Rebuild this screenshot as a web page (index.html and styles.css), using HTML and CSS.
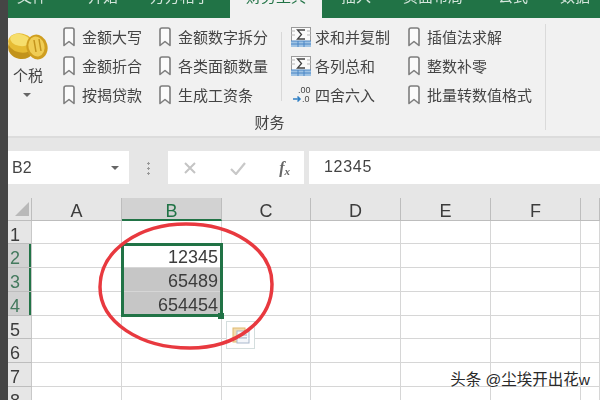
FILE: index.html
```html
<!DOCTYPE html>
<html lang="zh-CN">
<head>
<meta charset="UTF-8">
<title>财务工具</title>
<link rel="stylesheet" href="styles.css">
</head>
<body>
<svg class="defs" width="0" height="0">
    <symbol id="mark" viewBox="0 0 12 20">
        <path d="M1 3Q1 1 3 1H9Q11 1 11 3V18.500L6 14.500L1 18.500Z" fill="#fbfbfb" stroke="#7d7d7d" stroke-width="1.600" stroke-linejoin="round"/>
    </symbol>
    <symbol id="sum" viewBox="0 0 20 20">
        <rect x="0.500" y="0.500" width="19" height="19" fill="#fafafa" stroke="#9a9a9a"/>
        <path d="M0 14H20V20H0Z" fill="#9fc3e4"/>
        <path d="M0 14H20M0 17H20M7 14V20M13 14V20" stroke="#4a86c5" stroke-width="1"/>
        <path d="M0 4H4M0 8H4M16 4H20M16 8H20" stroke="#b5b5b5"/>
        <path d="M14 3H6.500L10.500 7.500L6.500 12H14" fill="none" stroke="#444" stroke-width="1.300"/>
    </symbol>
</svg>
<div class="app">
    <div class="edge"></div>
    <div class="main">
        <div class="tabs">
            <div class="tab tab-1"><span>文件</span></div>
            <div class="tab tab-2"><span>开始</span></div>
            <div class="tab tab-3"><span>方方格子</span></div>
            <div class="tab tab-4 active"><span>财务工具</span></div>
            <div class="tab tab-5"><span>插入</span></div>
            <div class="tab tab-6"><span>页面布局</span></div>
            <div class="tab tab-7"><span>公式</span></div>
            <div class="tab tab-8"><span>数据</span></div>
        </div>
        <div class="ribbon">
            <div class="group">
                <div class="group-row">
                    <div class="tax">
                        <svg class="coins" width="40" height="28" viewBox="0 0 40 28">
                            <ellipse cx="13" cy="16" rx="13" ry="11" fill="#c2931c" transform="rotate(12 13 16)"/>
                            <ellipse cx="13" cy="11" rx="13" ry="9.500" fill="#e6bb33" transform="rotate(12 13 11)"/>
                            <ellipse cx="12" cy="8" rx="10" ry="6" fill="#f6de6c" transform="rotate(12 12 8)"/>
                            <ellipse cx="29" cy="15" rx="10.500" ry="12.500" fill="#cf9e20" transform="rotate(-15 29 15)"/>
                            <ellipse cx="28.500" cy="14.500" rx="8" ry="10" fill="#f0cd55" transform="rotate(-15 28.500 14.500)"/>
                            <path d="M26 8L28 20M31 7L33 19" stroke="#c4951d" stroke-width="1.500"/>
                        </svg>
                        <div class="tax-label">个税</div>
                        <div class="caret"></div>
                    </div>
                    <div class="col col-1">
                        <div class="item"><svg class="mark"><use href="#mark"/></svg>金额大写</div>
                        <div class="item"><svg class="mark"><use href="#mark"/></svg>金额折合</div>
                        <div class="item"><svg class="mark"><use href="#mark"/></svg>按揭贷款</div>
                    </div>
                    <div class="col col-2">
                        <div class="item"><svg class="mark"><use href="#mark"/></svg>金额数字拆分</div>
                        <div class="item"><svg class="mark"><use href="#mark"/></svg>各类面额数量</div>
                        <div class="item"><svg class="mark"><use href="#mark"/></svg>生成工资条</div>
                    </div>
                    <div class="col col-3">
                        <div class="item"><svg class="sum"><use href="#sum"/></svg>求和并复制</div>
                        <div class="item"><svg class="sum"><use href="#sum"/></svg>各列总和</div>
                        <div class="item">
                            <svg class="sum" viewBox="0 0 20 20">
                                <text x="7" y="8" class="dec">.00</text>
                                <text x="11" y="17" class="dec">.0</text>
                                <path d="M2 14H9M6.500 11.500L9 14L6.500 16.500" fill="none" stroke="#2f7fc4" stroke-width="1.500"/>
                            </svg>四舍六入
                        </div>
                    </div>
                    <div class="col col-4">
                        <div class="item"><svg class="mark"><use href="#mark"/></svg>插值法求解</div>
                        <div class="item"><svg class="mark"><use href="#mark"/></svg>整数补零</div>
                        <div class="item"><svg class="mark"><use href="#mark"/></svg>批量转数值格式</div>
                    </div>
                </div>
                <div class="group-label">财务</div>
            </div>
        </div>
        <div class="formula-bar">
            <div class="name-box">B2<span class="caret"></span></div>
            <div class="dots"></div>
            <div class="fx-box">
                <svg width="14" height="14" viewBox="0 0 14 14"><path d="M2 2L12 12M12 2L2 12" stroke="#c4c4c4" stroke-width="2"/></svg>
                <svg width="16" height="14" viewBox="0 0 16 14"><path d="M1 8L6 13L15 2" fill="none" stroke="#c8c8c8" stroke-width="2.200"/></svg>
                <span class="fx">f<sub>x</sub></span>
            </div>
            <div class="formula-input">12345</div>
        </div>
        <div class="sheet">
            <div class="head corner"><div class="corner-mark"></div></div>
            <div class="head">A</div><div class="head head-on">B</div><div class="head">C</div><div class="head">D</div><div class="head">E</div><div class="head">F</div><div class="head"></div>

            <div class="num">1</div><div class="cell"></div><div class="cell"></div><div class="cell"></div><div class="cell"></div><div class="cell"></div><div class="cell"></div><div class="cell"></div>
            <div class="num num-on">2</div><div class="cell"></div><div class="cell">12345</div><div class="cell"></div><div class="cell"></div><div class="cell"></div><div class="cell"></div><div class="cell"></div>
            <div class="num num-on">3</div><div class="cell"></div><div class="cell grey">65489</div><div class="cell"></div><div class="cell"></div><div class="cell"></div><div class="cell"></div><div class="cell"></div>
            <div class="num num-on">4</div><div class="cell"></div><div class="cell grey">654454</div><div class="cell"></div><div class="cell"></div><div class="cell"></div><div class="cell"></div><div class="cell"></div>
            <div class="num">5</div><div class="cell"></div><div class="cell"></div><div class="cell"></div><div class="cell"></div><div class="cell"></div><div class="cell"></div><div class="cell"></div>
            <div class="num">6</div><div class="cell"></div><div class="cell"></div><div class="cell"></div><div class="cell"></div><div class="cell"></div><div class="cell"></div><div class="cell"></div>
            <div class="num">7</div><div class="cell"></div><div class="cell"></div><div class="cell"></div><div class="cell"></div><div class="cell"></div><div class="cell"></div><div class="cell"></div>
            <div class="num">8</div><div class="cell"></div><div class="cell"></div><div class="cell"></div><div class="cell"></div><div class="cell"></div><div class="cell"></div><div class="cell"></div>

            <div class="selection"><div class="handle"></div></div>
            <div class="paste">
                <svg width="20" height="20" viewBox="0 0 20 20">
                    <rect x="2" y="3" width="12" height="14" fill="#f3dcae" stroke="#e0b96e"/>
                    <rect x="6" y="6" width="12" height="12" fill="#f4f6fa" stroke="#a9b8cc"/>
                    <path d="M8 10H16M8 13H16" stroke="#9aa8ba"/>
                </svg>
            </div>
            <svg class="oval" width="592" height="202" viewBox="8 198 592 202">
                <path d="M100 287C100 250 140 224 186 224C232 224 272 248 272 284C272 322 235 348 190 348C140 348 100 322 100 287Z" fill="none" stroke="#e8393f" stroke-width="3.500"/>
            </svg>
        </div>
    </div>
</div>
<div class="watermark">头条 @尘埃开出花w</div>
</body>
</html>
```
FILE: styles.css
```css
* {
    box-sizing: border-box;
}
html, body {
    margin: 0;
    width: 600px;
    height: 400px;
    overflow: hidden;
}
body {
    font-family: "Liberation Sans", "Noto Sans CJK SC", sans-serif;
    color: #444;
    background-color: #fff;
    position: relative;
}
.defs {
    position: absolute;
}
.app {
    display: flex;
    height: 400px;
    filter: blur(0.4px);
}
.edge {
    width: 8px;
    background-color: #454545;
    flex: none;
}
.main {
    width: 592px;
    flex: none;
}

/* tabs, cut off by the top of the picture */
.tabs {
    display: flex;
    height: 18px;
    background-color: #217346;
    overflow: hidden;
}
.tab {
    color: #d5e6dc;
    font-size: 15px;
    line-height: 20px;
    text-align: center;
}
.tab span {
    display: block;
    margin-top: -13px;
}
.tab.active {
    background-color: #f1f1f1;
    color: #217346;
}
.tab-1 { width: 68px; padding-right: 20px; }
.tab-2 { width: 54px; }
.tab-3 { width: 100px; }
.tab-4 { width: 92px; }
.tab-5 { width: 68px; }
.tab-6 { width: 86px; }
.tab-7 { width: 74px; }
.tab-8 { width: 50px; }

/* ribbon */
.ribbon {
    display: flex;
    height: 120px;
    background-color: #f1f1f1;
    border-bottom: 2px solid #dcdcdc;
}
.group {
    width: 538px;
    height: 106px;
    margin-top: 6px;
    border-right: 1px solid #dadada;
}
.group-row {
    display: flex;
    height: 88px;
    margin-top: -2px;
}
.group-label {
    font-size: 15px;
    line-height: 26px;
    text-align: center;
    padding-right: 14px;
}
.tax {
    width: 55px;
    padding-top: 10px;
    flex: none;
}
.coins {
    display: block;
}
.tax-label {
    width: 40px;
    font-size: 15px;
    line-height: 20px;
    margin-top: 6px;
    text-align: center;
}
.tax .caret {
    margin: 7px 0 0 15px;
}
.caret {
    display: block;
    width: 0;
    height: 0;
    border-left: 4px solid transparent;
    border-right: 4px solid transparent;
    border-top: 4px solid #666;
}
.col {
    flex: none;
}
.col-1 { width: 96px; }
.col-2 { width: 123px; border-right: 1px solid #d8d8d8; height: 69px; margin-top: 10px; }
.col-3 { width: 126px; padding-left: 9px; }
.col-4 { width: 137px; }
.col-2 .item:first-child {
    margin-top: -10px;
}
.item {
    display: flex;
    align-items: center;
    height: 29px;
    font-size: 15px;
    white-space: nowrap;
}
.mark {
    width: 12px;
    height: 20px;
    margin-right: 7px;
    flex: none;
}
.sum {
    width: 20px;
    height: 20px;
    margin-right: 4px;
    flex: none;
}
.dec {
    font-size: 9px;
    fill: #444;
}

/* formula bar */
.formula-bar {
    display: flex;
    height: 60px;
    padding-top: 13px;
    background-color: #e6e6e6;
}
.name-box {
    display: flex;
    align-items: center;
    justify-content: space-between;
    width: 121px;
    height: 33px;
    padding: 0 10px 0 4px;
    background-color: #fff;
    font-size: 16px;
}
.dots {
    width: 3px;
    height: 14px;
    margin: 10px 18px 0 18px;
    background-image: radial-gradient(circle, #999 1px, transparent 1.300px);
    background-size: 3px 5px;
}
.fx-box {
    display: flex;
    align-items: center;
    justify-content: space-between;
    width: 136px;
    height: 33px;
    padding: 0 14px 0 15px;
    background-color: #fff;
}
.fx {
    font-family: "Liberation Serif", serif;
    font-style: italic;
    font-weight: bold;
    font-size: 16px;
    color: #666;
}
.fx sub {
    font-size: 11px;
    line-height: 0;
    vertical-align: -2px;
}
.formula-input {
    flex: 1;
    height: 33px;
    margin-left: 5px;
    padding-left: 15px;
    background-color: #fff;
    font-size: 16px;
    letter-spacing: 0.700px;
    line-height: 31px;
}

/* sheet */
.sheet {
    display: grid;
    grid-template-columns: 24px 90px 100px 89px 90px 90px 90px 19px;
    grid-template-rows: 23px 23px 24px 24px 24px 23px 24px 24px 24px;
    position: relative;
    height: 202px;
    overflow: hidden;
    background-color: #fff;
}
.head, .num {
    background-color: #e6e6e6;
    color: #3c3c3c;
    font-size: 18px;
    text-align: center;
    border-right: 1px solid #c8c8c8;
    border-bottom: 1px solid #bdbdbd;
}
.head {
    line-height: 26px;
    border-right-color: #bdbdbd;
}
.head-on {
    background-color: #d2d2d2;
    color: #217346;
    border-bottom: 2px solid #217346;
}
.num {
    line-height: 28px;
    text-align: left;
    padding-left: 2px;
}
.num-on {
    background-color: #d2d2d2;
    color: #447a5e;
    box-shadow: inset -2px 0 0 #217346;
}
.corner {
    position: relative;
}
.corner-mark {
    position: absolute;
    left: 7px;
    top: 4px;
    width: 0;
    height: 0;
    border-left: 14px solid transparent;
    border-bottom: 14px solid #b9b9b9;
}
.cell {
    font-size: 18px;
    line-height: 27px;
    color: #3c3c3c;
    text-align: right;
    padding-right: 3px;
    border-right: 1px solid #d6d6d6;
    border-bottom: 1px solid #d6d6d6;
}
.grey {
    background-color: #c6c6c6;
}
.selection {
    position: absolute;
    left: 113px;
    top: 45px;
    width: 102px;
    height: 74px;
    border: 3px solid #217346;
}
.handle {
    position: absolute;
    right: -4px;
    bottom: -5px;
    width: 6px;
    height: 6px;
    background-color: #217346;
}
.paste {
    position: absolute;
    left: 218px;
    top: 123px;
    width: 29px;
    height: 28px;
    display: flex;
    align-items: center;
    justify-content: center;
    background-color: #fff;
    border: 1px solid #d4dede;
}
.oval {
    position: absolute;
    left: 0;
    top: 0;
}
.watermark {
    position: absolute;
    right: 10px;
    top: 370px;
    font-size: 15.500px;
    line-height: 20px;
    color: #2a2a2a;
    text-shadow: 0 0 2px #fff, 0 0 2px #fff;
}
```
